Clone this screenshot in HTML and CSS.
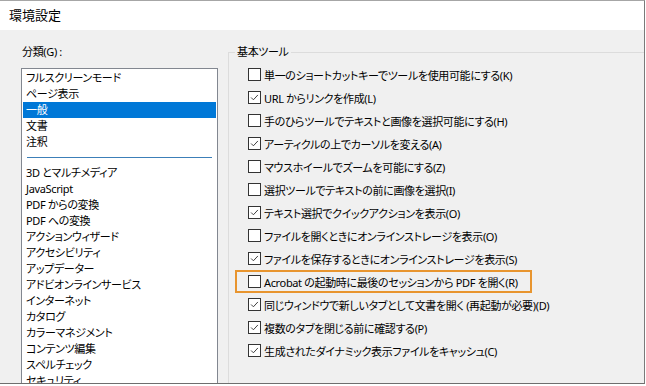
FILE: index.html
```html
<!DOCTYPE html>
<html lang="ja">
<head>
<meta charset="utf-8">
<title>環境設定</title>
<link rel="stylesheet" href="styles.css">
</head>
<body>
<div class="window">
  <div class="titlebar">環境設定</div>
  <div class="main">
    <div class="cat">
      <div class="cat-label">分類(G) :</div>
      <div class="listbox">
        <div class="item">フルスクリーンモード</div>
        <div class="item">ページ表示</div>
        <div class="item sel">一般</div>
        <div class="item">文書</div>
        <div class="item">注釈</div>
        <div class="sep"></div>
        <div class="item">3D とマルチメディア</div>
        <div class="item">JavaScript</div>
        <div class="item">PDF からの変換</div>
        <div class="item">PDF への変換</div>
        <div class="item">アクションウィザード</div>
        <div class="item">アクセシビリティ</div>
        <div class="item">アップデーター</div>
        <div class="item">アドビオンラインサービス</div>
        <div class="item">インターネット</div>
        <div class="item">カタログ</div>
        <div class="item">カラーマネジメント</div>
        <div class="item">コンテンツ編集</div>
        <div class="item">スペルチェック</div>
        <div class="item">セキュリティ</div>
      </div>
    </div>
    <fieldset class="group">
      <legend>基本ツール</legend>
      <div class="opts">
        <div class="opt"><span class="cb"></span><span>単一のショートカットキーでツールを使用可能にする(K)</span></div>
        <div class="opt"><span class="cb on"><svg viewBox="0 0 13 13"><path d="M2.5 6.5 L5.2 9.2 L10.5 3.5"/></svg></span><span>URL からリンクを作成(L)</span></div>
        <div class="opt"><span class="cb"></span><span>手のひらツールでテキストと画像を選択可能にする(H)</span></div>
        <div class="opt"><span class="cb on"><svg viewBox="0 0 13 13"><path d="M2.5 6.5 L5.2 9.2 L10.5 3.5"/></svg></span><span>アーティクルの上でカーソルを変える(A)</span></div>
        <div class="opt"><span class="cb"></span><span>マウスホイールでズームを可能にする(Z)</span></div>
        <div class="opt"><span class="cb"></span><span>選択ツールでテキストの前に画像を選択(I)</span></div>
        <div class="opt"><span class="cb on"><svg viewBox="0 0 13 13"><path d="M2.5 6.5 L5.2 9.2 L10.5 3.5"/></svg></span><span>テキスト選択でクイックアクションを表示(O)</span></div>
        <div class="opt"><span class="cb"></span><span>ファイルを開くときにオンラインストレージを表示(O)</span></div>
        <div class="opt"><span class="cb on"><svg viewBox="0 0 13 13"><path d="M2.5 6.5 L5.2 9.2 L10.5 3.5"/></svg></span><span>ファイルを保存するときにオンラインストレージを表示(S)</span></div>
        <div class="opt hl"><span class="cb"></span><span>Acrobat の起動時に最後のセッションから PDF を開く(R)</span></div>
        <div class="opt"><span class="cb on"><svg viewBox="0 0 13 13"><path d="M2.5 6.5 L5.2 9.2 L10.5 3.5"/></svg></span><span>同じウィンドウで新しいタブとして文書を開く (再起動が必要)(D)</span></div>
        <div class="opt"><span class="cb on"><svg viewBox="0 0 13 13"><path d="M2.5 6.5 L5.2 9.2 L10.5 3.5"/></svg></span><span>複数のタブを閉じる前に確認する(P)</span></div>
        <div class="opt"><span class="cb on"><svg viewBox="0 0 13 13"><path d="M2.5 6.5 L5.2 9.2 L10.5 3.5"/></svg></span><span>生成されたダイナミック表示ファイルをキャッシュ(C)</span></div>
      </div>
    </fieldset>
  </div>
</div>
</body>
</html>
```

FILE: styles.css
```css
html, body {
  margin: 0;
  padding: 0;
  background: #ffffff;
}
body {
  width: 646px;
  height: 386px;
  overflow: hidden;
  font-family: "Noto Sans", "Noto Sans CJK JP", sans-serif;
  font-feature-settings: "palt";
  font-size: 11px;
  letter-spacing: -0.35px;
  color: #000;
}
.window {
  box-sizing: border-box;
  width: 645px;
  height: 384px;
  border-top: 1px solid #a6a6a6;
  border-right: 1px solid #7a7a7a;
  border-bottom: 1px solid #6e6e6e;
  overflow: hidden;
  display: flex;
  flex-direction: column;
  background: #f0f0f0;
}
.titlebar {
  height: 29px;
  line-height: 29px;
  background: #ffffff;
  padding-left: 9px;
  font-size: 13px;
  letter-spacing: 0;
  flex: none;
}
.main {
  flex: 1;
  display: flex;
  min-height: 0;
}
.cat {
  margin-left: 21px;
  width: 197px;
  flex: none;
  display: flex;
  flex-direction: column;
}
.cat-label {
  margin-top: 14px;
  height: 16px;
  line-height: 16px;
  padding-left: 1px;
  margin-bottom: 8px;
}
.listbox {
  box-sizing: border-box;
  flex: none;
  height: 400px;
  background: #ffffff;
  border: 1px solid #828790;
  padding: 1px 1px 0 1px;
}
.item {
  height: 16px;
  line-height: 16px;
  padding-left: 3px;
  white-space: nowrap;
}
.item.sel {
  background: #0078d7;
  color: #ffffff;
}
.sep {
  height: 15px;
  box-sizing: border-box;
  padding-top: 7px;
  margin: 0 4px;
}
.sep::before {
  content: "";
  display: block;
  height: 1px;
  background: #3c7fb8;
}
.group {
  margin: 14px 0 0 10px;
  padding: 0;
  flex: 1;
  min-width: 0;
  height: 400px;
  border: 1px solid #dcdcdc;
  border-right: 0;
  border-bottom: 0;
}
.group legend {
  margin-left: 6px;
  padding: 0 2px;
  line-height: 16px;
  height: 16px;
}
.opts {
  padding: 3px 0 0 19px;
}
.opt {
  box-sizing: border-box;
  height: 23px;
  display: flex;
  align-items: center;
  white-space: nowrap;
}
.opt.hl {
  width: 297px;
  margin-left: -13px;
  padding-left: 11px;
  border: 2px solid #e8952f;
}
.cb {
  box-sizing: border-box;
  width: 13px;
  height: 13px;
  border: 1px solid #333333;
  background: #ffffff;
  margin-right: 3px;
  flex: none;
  display: flex;
}
.cb svg {
  width: 11px;
  height: 11px;
}
.cb svg path {
  fill: none;
  stroke: #333333;
  stroke-width: 1.1;
}
```
